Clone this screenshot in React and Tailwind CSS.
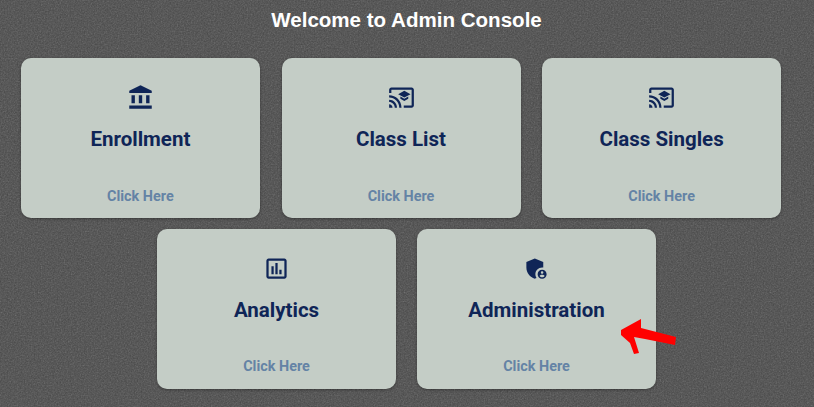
import React from "react";

const Bank = () => <path d="M4 10h3v7H4zM10.5 10h3v7h-3zM2 19h20v3H2zM17 10h3v7h-3zM12 1L2 6v2h20V6z" />;
const Cast = () => <path d="M21 3H3c-1.1 0-2 .9-2 2v3h2V5h18v14h-7v2h7c1.1 0 2-.9 2-2V5c0-1.1-.9-2-2-2zM1 18v3h3c0-1.66-1.34-3-3-3zm0-4v2c2.76 0 5 2.24 5 5h2c0-3.87-3.13-7-7-7zm0-4v2c4.97 0 9 4.03 9 9h2c0-6.08-4.93-11-11-11zm10 1.09v2L14.5 15l3.5-1.91v-2L14.5 13 11 11.09zM14.5 6L9 9l5.5 3L20 9l-5.5-3z" />;
const Chart = () => <path d="M19 3H5c-1.1 0-2 .9-2 2v14c0 1.1.9 2 2 2h14c1.1 0 2-.9 2-2V5c0-1.1-.9-2-2-2zm0 16H5V5h14v14zM7.5 10h2v7h-2zM11 7h2v10h-2zM14.5 13h2v4h-2z" />;
const Shield = () => (
  <>
    <path d="M17 11c.34 0 .67.04 1 .09V6.27L10.5 3 3 6.27v4.91c0 4.54 3.2 8.79 7.5 9.82.55-.13 1.08-.32 1.6-.55C11.41 19.47 11 18.28 11 17c0-3.31 2.69-6 6-6z" />
    <path d="M17 13c-2.21 0-4 1.79-4 4s1.79 4 4 4 4-1.79 4-4-1.79-4-4-4zm0 1.38c.62 0 1.12.51 1.12 1.12s-.51 1.12-1.12 1.12-1.12-.51-1.12-1.12.5-1.12 1.12-1.12zm0 5.37c-.93 0-1.74-.46-2.24-1.17.05-.72 1.51-1.08 2.24-1.08s2.19.36 2.24 1.08c-.5.71-1.31 1.17-2.24 1.17z" />
  </>
);

function Card({ icon, title, foot = "mt-[33px]" }) {
  return (
    <div className="flex h-[160px] w-[239px] flex-col items-center rounded-[10px] bg-[#c4cdc6] shadow-[0_1px_3px_rgba(0,0,0,0.35)]">
      <div className="mt-[25px] flex h-7 w-7 items-center justify-center">
        <svg viewBox="0 0 24 24" className="h-[27px] w-[27px] fill-[#0f2557]">{icon}</svg>
      </div>
      <div className="mt-[14px] text-[20.5px] font-bold leading-[28px] text-[#0f2557]">{title}</div>
      <div className={`${foot} text-[14.4px] font-bold leading-[20px] text-[#6483a5]`}>Click Here</div>
    </div>
  );
}

export default function App() {
  return (
    <div className="relative h-[407px] w-[814px] overflow-hidden bg-[#474747] font-['Roboto',sans-serif]">
      <svg className="pointer-events-none absolute inset-0 h-full w-full opacity-30" aria-hidden="true">
        <filter id="grain">
          <feTurbulence type="fractalNoise" baseFrequency="0.7" numOctaves="2" stitchTiles="stitch" />
          <feColorMatrix type="saturate" values="0" />
        </filter>
        <rect width="100%" height="100%" filter="url(#grain)" />
      </svg>
      <div className="relative flex flex-col items-center">
        <h1 className="mr-[1px] mt-[9px] font-['Liberation_Sans',sans-serif] text-[20.55px] font-bold leading-[22px] text-white">Welcome to Admin Console</h1>
        <div className="mr-[12px] mt-[27px] flex gap-x-[21.6px]">
          <Card icon={<Bank />} title="Enrollment" foot="mt-[34px]" />
          <Card icon={<Cast />} title="Class List" foot="mt-[34px]" />
          <Card icon={<Cast />} title="Class Singles" foot="mt-[34px]" />
        </div>
        <div className="mr-[1px] mt-[11px] flex gap-x-[21px]">
          <Card icon={<Chart />} title="Analytics" />
          <Card icon={<Shield />} title="Administration" />
        </div>
      </div>
      <svg className="pointer-events-none absolute left-[610px] top-[310px] h-[50px] w-[75px]" viewBox="610 310 75 50" aria-hidden="true">
        <path d="M621 330 L641 319 L641 328 L676 337 L675 345 L645 339 L634 337 L639 353 L634 354 L630 343 L621 335 Z" fill="#ff0000" />
      </svg>
    </div>
  );
}
